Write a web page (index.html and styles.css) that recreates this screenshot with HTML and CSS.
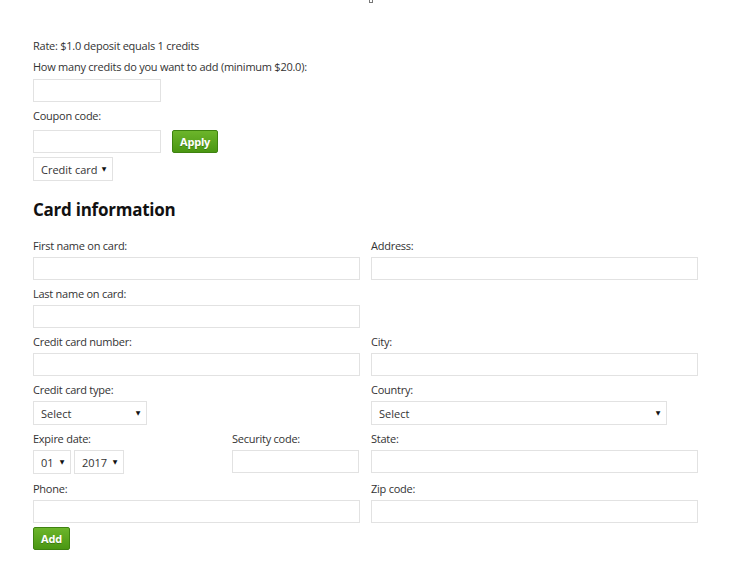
FILE: index.html
```html
<!DOCTYPE html>
<html>
<head>
<meta charset="utf-8">
<link rel="stylesheet" href="styles.css">
</head>
<body>
<div class="topmark"><span class="mark"></span></div>
<div class="page">
  <p class="line">Rate: $1.0 deposit equals 1 credits</p>
  <label class="lbl">How many credits do you want to add (minimum $20.0):</label>
  <div class="row"><input class="inp short" type="text"></div>
  <label class="lbl lbl-coupon">Coupon code:</label>
  <div class="row coupon"><input class="inp short" type="text"><button class="btn">Apply</button></div>
  <div class="row"><span class="sel w-method"><select><option>Credit card</option></select><span class="arr">▼</span></span></div>

  <h2 class="title">Card information</h2>

  <div class="grid">
    <div class="field"><label class="lbl">First name on card:</label><input class="inp" type="text"></div>
    <div class="field"><label class="lbl">Address:</label><input class="inp" type="text"></div>

    <div class="field"><label class="lbl">Last name on card:</label><input class="inp" type="text"></div>
    <div class="field"></div>

    <div class="field"><label class="lbl">Credit card number:</label><input class="inp" type="text"></div>
    <div class="field"><label class="lbl">City:</label><input class="inp" type="text"></div>

    <div class="field"><label class="lbl">Credit card type:</label><span class="sel w-type"><select><option>Select</option></select><span class="arr">▼</span></span></div>
    <div class="field"><label class="lbl">Country:</label><span class="sel w-country"><select><option>Select</option></select><span class="arr">▼</span></span></div>

    <div class="field split">
      <div>
        <label class="lbl">Expire date:</label>
        <div class="dates">
          <span class="sel w-month"><select><option>01</option></select><span class="arr">▼</span></span>
          <span class="sel w-year"><select><option>2017</option></select><span class="arr">▼</span></span>
        </div>
      </div>
      <div>
        <label class="lbl">Security code:</label>
        <input class="inp sec" type="text">
      </div>
    </div>
    <div class="field"><label class="lbl">State:</label><input class="inp" type="text"></div>

    <div class="field"><label class="lbl">Phone:</label><input class="inp" type="text"></div>
    <div class="field"><label class="lbl">Zip code:</label><input class="inp" type="text"></div>
  </div>
  <button class="btn add">Add</button>
</div>
</body>
</html>
```
FILE: styles.css
```css
html, body {
  margin: 0;
  padding: 0;
  background: #fff;
}
body {
  font-family: "Open Sans", "DejaVu Sans", sans-serif;
  font-size: 11px;
  letter-spacing: -0.25px;
  color: #333;
}
.topmark {
  height: 0;
  display: flex;
  padding-left: 369px;
}
.mark {
  display: block;
  width: 2px;
  height: 2px;
  border: 1px solid #777;
  border-top: none;
}
.page {
  width: 664px;
  padding: 37px 0 30px 33px;
}
.line {
  margin: 0 0 3px;
  line-height: 18px;
}
.lbl {
  display: block;
  line-height: 18px;
  margin-bottom: 3px;
}
.lbl-coupon {
  margin-bottom: 5px;
}
.row {
  display: flex;
  align-items: center;
  margin-bottom: 5px;
}
.coupon {
  gap: 11px;
  margin-bottom: 4px;
}
.inp {
  box-sizing: border-box;
  display: block;
  width: 327px;
  height: 23px;
  border: 1px solid #e2e2e2;
  background: #fff;
  margin: 0;
  padding: 0 6px;
  font: inherit;
  outline: none;
}
.inp.short {
  width: 128px;
}
.inp.sec {
  width: 127px;
}
.btn {
  box-sizing: border-box;
  height: 23px;
  padding: 0 7px;
  border: 1px solid #3e8210;
  border-radius: 2px;
  background: linear-gradient(#6cb52b, #4a9712);
  color: #fff;
  font-family: "Open Sans", "DejaVu Sans", sans-serif;
  font-weight: 700;
  font-size: 11px;
  letter-spacing: -0.2px;
  text-shadow: 0 1px 0 rgba(0, 0, 0, 0.25);
  margin: 0;
}
.btn.add {
  display: block;
  width: 37px;
  padding: 0;
}
.sel {
  display: inline-grid;
  box-sizing: border-box;
  height: 24px;
  border: 1px solid #e2e2e2;
  background: #fff;
  align-items: center;
}
.sel select {
  grid-area: 1 / 1;
  appearance: none;
  -webkit-appearance: none;
  border: none;
  background: transparent;
  font: inherit;
  color: #333;
  padding: 0 0 0 7px;
  margin: 0;
  height: 22px;
  outline: none;
}
.sel .arr {
  grid-area: 1 / 1;
  justify-self: end;
  font-size: 6px;
  color: #111;
  padding-right: 6px;
  pointer-events: none;
}
.w-method { width: 80px; }
.w-type { width: 114px; }
.w-country { width: 296px; }
.w-month { width: 38px; }
.w-year { width: 50px; }
.title {
  font-size: 17px;
  font-weight: 700;
  letter-spacing: -0.25px;
  color: #111;
  margin: 17px 0 15px;
  line-height: 24px;
}
.grid {
  display: grid;
  grid-template-columns: 327px 327px;
  grid-template-rows: 48px 48px 48px 49px 50px auto;
  column-gap: 11px;
}
.field {
  min-height: 0;
}
.field .lbl {
  margin-bottom: 2px;
}
.split {
  display: grid;
  grid-template-columns: 199px 128px;
}
.dates {
  display: flex;
  gap: 3px;
}
.add {
  margin-top: 4px;
}
```
